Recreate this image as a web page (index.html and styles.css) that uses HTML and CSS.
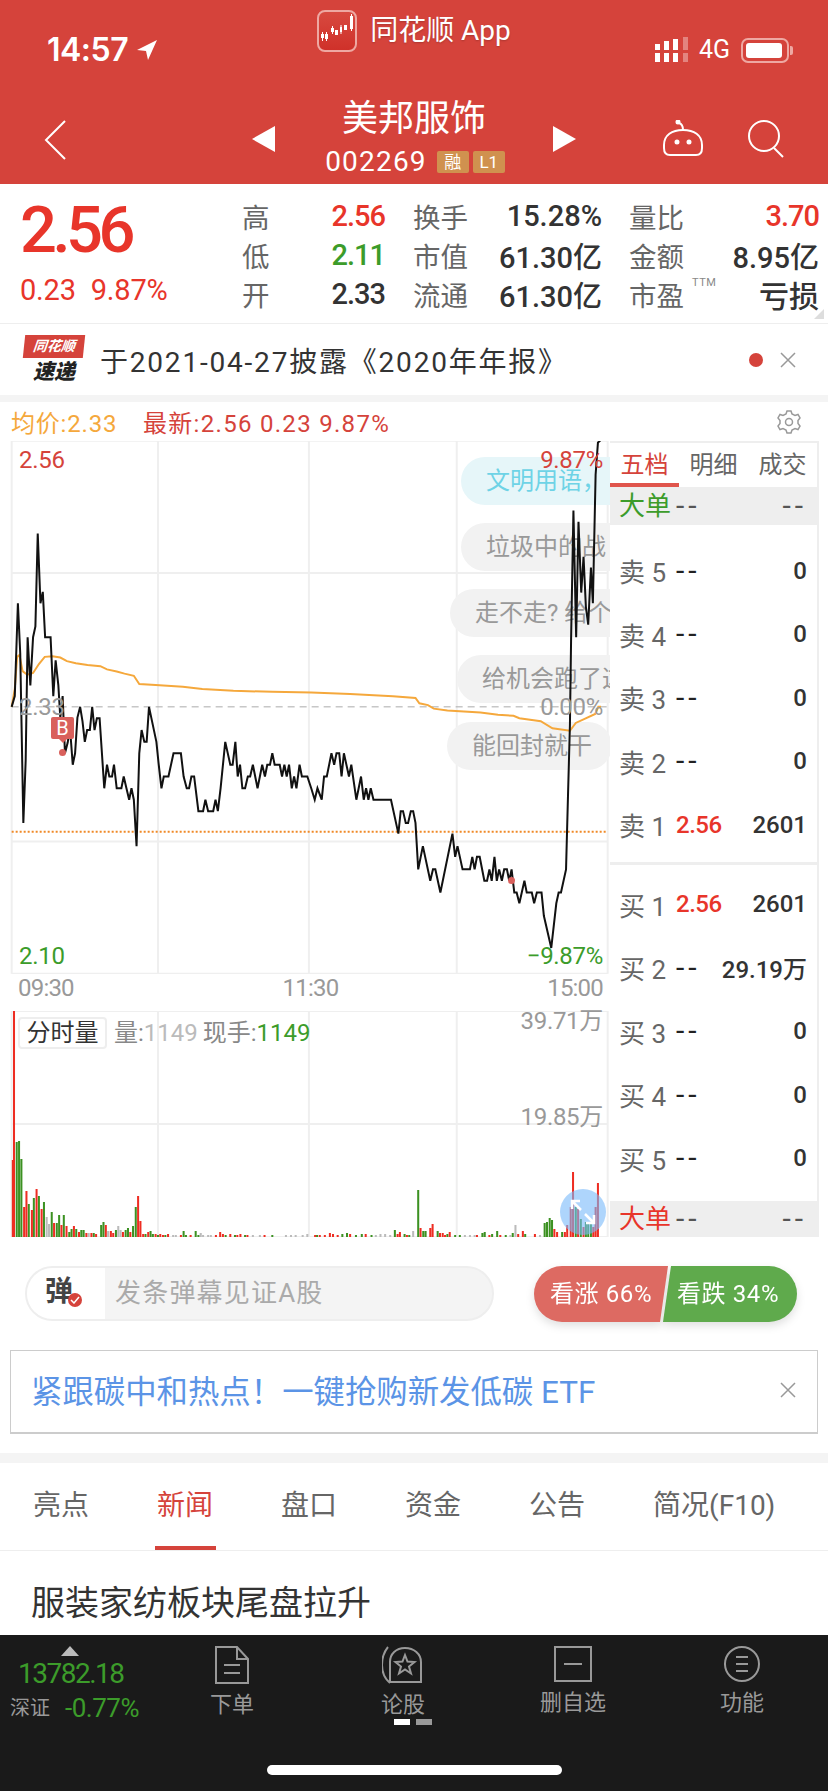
FILE: index.html
```html
<!DOCTYPE html>
<html lang="zh">
<head>
  <meta charset="UTF-8">
  <title>美邦服饰 002269</title>
  <link rel="stylesheet" href="styles.css">
</head>
<body>
<div id="page">

  <div class="header">
    <div class="status">
      <div class="status-left">
        <span class="clock">14:57</span>
        <svg class="locate" width="22" height="22" viewBox="0 0 22 22"><path d="M21 1 1 11l9 1 2 9z" fill="#fff"/></svg>
      </div>
      <div class="app-name">
        <svg class="app-logo" width="40" height="42" viewBox="0 0 40 42">
          <defs><linearGradient id="logoRed" x1="0" y1="0" x2="0" y2="1"><stop offset="0" stop-color="#d84a40"/><stop offset="1" stop-color="#cf3029"/></linearGradient></defs>
          <rect x="1" y="1" width="38" height="40" rx="7" fill="url(#logoRed)" stroke="#eea8a2" stroke-width="2"/>
          <path d="M4 24h3v4H4zM8 24h3v5H8zM14 18h3v4h-3zM18 20h3v5h-3zM23 17h2v5h-2zM27 15h3v5h-3zM33 6h3v13h-3z" fill="#fff"/>
          <path d="M5.500 22v9M9.500 22v9M15.500 16v8M24 15v9M34.500 4v17" stroke="#fff" fill="none"/>
        </svg>
        <span>同花顺 App</span>
      </div>
      <div class="status-right">
        <svg width="33" height="26" viewBox="0 0 33 26">
          <path d="M0 7h5v6H0zM9 4h5v9H9zM18 2h5v11h-5zM0 16h5v9H0zM9 16h5v9H9zM18 16h5v9h-5z" fill="#fff"/>
          <path d="M28 0h5v13h-5zM28 16h5v9h-5z" fill="#fff" opacity=".35"/>
        </svg>
        <span class="net">4G</span>
        <span class="battery"><i></i></span>
      </div>
    </div>
    <div class="nav">
      <div class="nav-left">
        <svg width="22" height="40" viewBox="0 0 22 40"><path d="M21 1 2 20l19 19" fill="none" stroke="#fff" stroke-width="2"/></svg>
      </div>
      <div class="nav-center">
        <span class="tri tri-left"></span>
        <div class="stock">
          <div class="stock-name">美邦服饰</div>
          <div class="stock-code">002269<b>融</b><b>L1</b></div>
        </div>
        <span class="tri tri-right"></span>
      </div>
      <div class="nav-right">
        <svg width="40" height="36" viewBox="0 0 40 36" fill="none" stroke="#fff" stroke-width="2">
          <path d="M1 25C1 15 9 10 20 10s19 5 19 15v3c0 5-2 7-6 7H7c-4 0-6-2-6-7z"/>
          <path d="M20 10c0-4-1-6-4-7"/>
          <circle cx="15" cy="2" r="1.500" fill="#fff"/>
          <circle cx="14" cy="22" r="1.500" fill="#fff"/>
          <circle cx="26" cy="22" r="1.500" fill="#fff"/>
        </svg>
        <svg width="38" height="38" viewBox="0 0 38 38" fill="none" stroke="#fff" stroke-width="2">
          <circle cx="16" cy="16" r="15"/>
          <path d="m26 28 9 9"/>
        </svg>
      </div>
    </div>
  </div>

  <div class="quote">
    <div class="price">
      <div class="price-now">2.56</div>
      <div class="price-change"><span>0.23</span><span>9.87%</span></div>
    </div>
    <div class="stats">
      <span class="stat-label first">高</span><span class="stat-val up">2.56</span>
      <span class="stat-label">换手</span><span class="stat-val wide">15.28%</span>
      <span class="stat-label">量比</span><span class="stat-val up">3.70</span>
      <span class="stat-label first">低</span><span class="stat-val down">2.11</span>
      <span class="stat-label">市值</span><span class="stat-val wide">61.30亿</span>
      <span class="stat-label">金额</span><span class="stat-val wide">8.95亿</span>
      <span class="stat-label first">开</span><span class="stat-val">2.33</span>
      <span class="stat-label">流通</span><span class="stat-val wide">61.30亿</span>
      <span class="stat-label ttm">市盈<sup>TTM</sup></span><span class="stat-val loss">亏损</span>
    </div>
    <span class="corner"></span>
  </div>

  <div class="notice">
    <div class="flash">
      <div class="flash-tag">同花顺</div>
      <div class="flash-name">速递</div>
    </div>
    <div class="notice-text">于2021-04-27披露《2020年年报》</div>
    <span class="notice-dot"></span>
    <svg class="close" width="16" height="16" viewBox="0 0 16 16"><path d="m1 1 14 14M15 1 1 15"/></svg>
  </div>
  <div class="band"></div>

  <div class="chart-head">
    <span class="avg">均价:2.33</span>
    <span class="latest">最新:2.56 0.23 9.87%</span>
    <svg class="gear" width="26" height="26" viewBox="0 0 26 26" fill="none" stroke="#999" stroke-width="1.500">
      <path d="M11 2h4l1 3 3 1.500 3-1 2 3.500-2 2.500v3l2 2.500-2 3.500-3-1-3 1.500-1 3h-4l-1-3-3-1.500-3 1-2-3.500 2-2.500v-3L2 9l2-3.500 3 1L10 5z"/>
      <circle cx="13" cy="13" r="3.500"/>
    </svg>
  </div>

  <div class="market">
    <div class="charts">
      <div class="price-chart">
        <svg class="plot" viewBox="0 0 1568 1568" preserveAspectRatio="none">
          <g class="grid">
            <path d="M30 5H1562M30 375H1562M30 1127H1562M30 1497H1562M30 5V1497M406 5V1497M794 5V1497M1174 5V1497M1562 5V1497"/>
          </g>
          <path class="dash" d="M30 750H1562"/>
          <path class="dots" d="M30 1100H1562"/>
        </svg>
        <div class="danmu d1">文明用语，</div>
        <div class="danmu d2">垃圾中的战</div>
        <div class="danmu d3">走不走? 给个</div>
        <div class="danmu d4">给机会跑了这</div>
        <div class="danmu d5">能回封就干</div>
        <svg class="plot" viewBox="0 0 1568 1568" preserveAspectRatio="none">
          <polyline class="avg-line" points="30,750 38,700 44,610 50,605 58,650 70,660 85,655 100,630 115,610 135,608 155,612 172,622 195,628 225,633 258,636 275,645 300,651 320,657 344,663 358,686 400,689 470,694 520,700 600,705 700,708 800,710 900,714 1010,720 1068,725 1078,740 1100,745 1115,755 1150,760 1235,766 1280,772 1320,775 1335,782 1390,790 1420,810 1465,817 1480,795 1500,785 1530,770 1538,750 1545,750"/>
          <polyline class="price-line" points="30,750 38,720 46,460 52,600 60,1075 66,900 71,555 78,690 85,555 91,525 97,265 104,460 110,428 116,555 130,555 137,720 143,620 150,690 155,780 161,720 167,880 174,850 180,810 187,912 193,880 199,780 206,750 212,790 218,848 224,815 231,815 237,750 243,815 249,782 256,782 262,880 268,978 275,912 281,945 288,945 293,912 300,978 312,978 318,945 325,978 332,1010 338,978 344,1010 351,1140 358,880 364,815 371,848 377,848 383,750 402,848 408,912 415,978 421,945 433,945 446,880 465,880 472,945 480,978 486,978 492,945 499,945 510,1042 522,1042 528,1010 535,1042 548,1042 554,1010 560,1042 567,978 579,848 592,912 598,912 605,848 611,945 617,912 623,978 630,978 637,945 643,945 650,912 662,978 674,912 681,945 687,912 694,912 700,880 706,912 719,912 725,945 731,912 737,945 743,912 750,978 756,945 762,978 770,912 776,945 790,945 800,978 809,1010 816,978 827,1010 833,945 840,945 852,880 859,912 865,880 872,880 878,945 884,880 897,945 903,912 916,1010 928,945 935,1010 941,978 947,1010 953,978 960,1010 1005,1010 1024,1105 1030,1042 1036,1042 1043,1075 1049,1075 1056,1042 1062,1042 1068,1075 1075,1205 1087,1140 1106,1237 1113,1205 1119,1205 1132,1270 1163,1105 1170,1170 1176,1140 1189,1205 1208,1205 1214,1170 1220,1205 1226,1170 1233,1170 1245,1237 1252,1237 1258,1205 1264,1237 1271,1170 1277,1237 1283,1205 1290,1237 1296,1205 1303,1205 1309,1237 1315,1205 1322,1270 1328,1270 1335,1300 1348,1237 1354,1270 1367,1270 1373,1300 1380,1270 1392,1270 1398,1335 1417,1425 1430,1300 1436,1270 1442,1270 1455,1205 1460,1000 1465,800 1468,560 1474,200 1481,555 1487,232 1494,430 1500,330 1506,470 1512,520 1519,360 1524,460 1531,100 1537,10 1543,5"/>
        </svg>
        <span class="axis-label al-top-left up-dim">2.56</span>
        <span class="axis-label al-top-right up-dim">9.87%</span>
        <span class="axis-label al-mid-left">2.33</span>
        <span class="axis-label al-mid-right">0.00%</span>
        <span class="axis-label al-low-left down">2.10</span>
        <span class="axis-label al-low-right down">−9.87%</span>
        <span class="trade-flag">B</span>
        <span class="trade-dot td1"></span>
        <span class="trade-dot td2"></span>
      </div>
      <div class="time-axis"><span>09:30</span><span>11:30</span><span>15:00</span></div>
      <div class="vol-chart">
        <svg class="plot" viewBox="0 0 1568 226" preserveAspectRatio="none">
          <g class="grid">
            <path d="M30 0H1562M30 113H1562M30 226H1562M30 0V226M406 0V226M794 0V226M1174 0V226M1562 0V226"/>
          </g>
          <path class="bar bar-grey" d="M120 226v-20M126 226v-13M228 226v-4M278 226v-6M304 226v-11M310 226v-7M445 226v-2M452 226v-2M516 226v-4M522 226v-2M535 226v-2M542 226v-2M650 226v-2M668 226v-2M735 226v-2M748 226v-2M760 226v-2M778 226v-2M790 226v-3M966 226v-2M978 226v-3M990 226v-3M1003 226v-2M1062 226v-6M1195 226v-2M1208 226v-2M1220 226v-2M1325 226v-12M1312 226v-2M1388 226v-2"/>
          <path class="bar bar-green" d="M43 226v-95M49 226v-96M55 226v-78M74 226v-33M87 226v-39M100 226v-41M113 226v-35M133 226v-25M146 226v-14M152 226v-22M164 226v-22M178 226v-5M184 226v-8M196 226v-8M209 226v-7M215 226v-7M241 226v-4M260 226v-12M266 226v-15M298 226v-7M323 226v-7M329 226v-9M342 226v-11M349 226v-30M374 226v-3M387 226v-6M393 226v-3M406 226v-2M425 226v-2M472 226v-6M478 226v-2M503 226v-6M510 226v-2M580 226v-2M604 226v-2M630 226v-2M700 226v-2M815 226v-2M880 226v-3M892 226v-4M915 226v-2M930 226v-3M955 226v-2M1015 226v-7M1040 226v-3M1052 226v-2M1075 226v-47M1088 226v-6M1094 226v-6M1125 226v-6M1150 226v-3M1170 226v-2M1182 226v-2M1240 226v-4M1246 226v-5M1265 226v-3M1278 226v-6M1300 226v-2M1318 226v-4M1350 226v-3M1400 226v-14M1406 226v-15M1413 226v-19M1419 226v-17M1445 226v-5M1480 226v-30M1493 226v-18M1506 226v-15M1512 226v-14M1519 226v-14"/>
          <path class="bar bar-red" d="M33 226v-77M36 226v-226M62 226v-30M68 226v-46M82 226v-27M94 226v-48M107 226v-28M139 226v-14M158 226v-12M171 226v-11M190 226v-11M203 226v-5M222 226v-4M235 226v-4M247 226v-3M272 226v-12M285 226v-6M291 226v-4M316 226v-5M335 226v-5M355 226v-41M361 226v-16M368 226v-3M381 226v-5M400 226v-3M412 226v-3M419 226v-2M432 226v-3M465 226v-2M490 226v-2M555 226v-2M566 226v-5M573 226v-3M592 226v-3M610 226v-2M618 226v-3M636 226v-2M680 226v-2M810 226v-2M822 226v-2M835 226v-2M848 226v-4M856 226v-3M868 226v-2M900 226v-3M940 226v-3M1022 226v-3M1028 226v-5M1046 226v-2M1081 226v-9M1106 226v-9M1112 226v-13M1131 226v-4M1138 226v-4M1144 226v-2M1156 226v-5M1226 226v-2M1258 226v-2M1286 226v-2M1332 226v-3M1344 226v-6M1375 226v-3M1425 226v-8M1432 226v-5M1452 226v-5M1458 226v-12M1467 226v-30M1473 226v-65M1486 226v-28M1500 226v-10M1525 226v-10M1531 226v-30M1537 226v-54"/>
        </svg>
        <div class="vol-legend">
          <span class="vol-tag">分时量</span>
          <span class="vol-item">量:<i class="faded">1149</i></span>
          <span class="vol-item">现手:<i class="down">1149</i></span>
        </div>
        <span class="vol-max">39.71万</span>
        <span class="vol-mid">19.85万</span>
        <span class="expand">
          <svg width="28" height="28" viewBox="0 0 28 28" fill="none" stroke="#fff" stroke-width="2.500"><path d="M3 11V3h8M3 3l9 9M25 17v8h-8M25 25l-9-9"/></svg>
        </span>
      </div>
    </div>

    <div class="book">
      <div class="book-tabs">
        <span class="active">五档</span><span>明细</span><span>成交</span>
      </div>
      <div class="big-order"><span class="down">大单</span><span class="none">--</span><span class="none none-end">--</span></div>
      <div class="levels sell">
        <div class="level"><span class="lv-name">卖 5</span><span class="none">--</span><span class="lv-vol">0</span></div>
        <div class="level"><span class="lv-name">卖 4</span><span class="none">--</span><span class="lv-vol">0</span></div>
        <div class="level"><span class="lv-name">卖 3</span><span class="none">--</span><span class="lv-vol">0</span></div>
        <div class="level"><span class="lv-name">卖 2</span><span class="none">--</span><span class="lv-vol">0</span></div>
        <div class="level"><span class="lv-name">卖 1</span><span class="lv-price">2.56</span><span class="lv-vol">2601</span></div>
      </div>
      <div class="levels buy">
        <div class="level"><span class="lv-name">买 1</span><span class="lv-price">2.56</span><span class="lv-vol">2601</span></div>
        <div class="level"><span class="lv-name">买 2</span><span class="none">--</span><span class="lv-vol">29.19万</span></div>
        <div class="level"><span class="lv-name">买 3</span><span class="none">--</span><span class="lv-vol">0</span></div>
        <div class="level"><span class="lv-name">买 4</span><span class="none">--</span><span class="lv-vol">0</span></div>
        <div class="level"><span class="lv-name">买 5</span><span class="none">--</span><span class="lv-vol">0</span></div>
      </div>
      <div class="big-order big-order-low"><span class="up">大单</span><span class="none">--</span><span class="none none-end">--</span></div>
    </div>
  </div>

  <div class="actions">
    <div class="danmu-input">
      <div class="danmu-key">弹<i><svg width="10" height="8" viewBox="0 0 10 8"><path d="m1 4 3 3 5-6" fill="none" stroke="#fff" stroke-width="1.500"/></svg></i></div>
      <div class="danmu-hint">发条弹幕见证A股</div>
    </div>
    <div class="vote">
      <div class="vote-up">看涨 66%</div>
      <div class="vote-down">看跌 34%</div>
    </div>
  </div>

  <div class="ad">
    <span class="ad-text">紧跟碳中和热点！一键抢购新发低碳 ETF</span>
    <svg class="close" width="16" height="16" viewBox="0 0 16 16"><path d="m1 1 14 14M15 1 1 15"/></svg>
  </div>
  <div class="band band-low"></div>

  <div class="tabs">
    <span>亮点</span><span class="active">新闻</span><span>盘口</span><span>资金</span><span>公告</span><span>简况(F10)</span>
  </div>
  <div class="headline">服装家纺板块尾盘拉升</div>

  <div class="footer">
    <div class="foot-row">
      <div class="index">
        <span class="index-tri"></span>
        <div class="index-val">13782.18</div>
        <div class="index-line"><span class="index-name">深证</span><span class="index-pct">-0.77%</span></div>
      </div>
      <div class="foot-item it1">
        <svg width="36" height="38" viewBox="0 0 36 38" fill="none" stroke="#999" stroke-width="2">
          <path d="M2 1h21l11 12v24H2zM23 1v12h11M10 19h16M10 27h16"/>
        </svg>
        <span>下单</span>
      </div>
      <div class="foot-item it2">
        <svg width="42" height="38" viewBox="0 0 42 38" fill="none" stroke="#999" stroke-width="2">
          <path d="M8 36V16C8 8 14 2 23 2s16 6 16 14v20z"/>
          <path d="M6 1C1 7 0 13 0 19s2 13 8 18"/>
          <path d="m23 9 2.500 6.500 7 .5-5.500 4.500 2 7-6-4-6 4 2-7-5.500-4.500 7-.5z"/>
        </svg>
        <span>论股</span>
      </div>
      <div class="foot-item it3">
        <svg width="38" height="36" viewBox="0 0 38 36" fill="none" stroke="#999" stroke-width="2">
          <path d="M1 1h36v34H1zM10 18h18"/>
        </svg>
        <span>删自选</span>
      </div>
      <div class="foot-item it4">
        <svg width="36" height="36" viewBox="0 0 36 36" fill="none" stroke="#999" stroke-width="2">
          <ellipse cx="18" cy="18" rx="17" ry="17"/>
          <path d="M12 11h12M12 18h12M12 25h12"/>
        </svg>
        <span>功能</span>
      </div>
    </div>
    <div class="pager"><i class="on"></i><i></i></div>
    <div class="home-bar"></div>
  </div>

</div>
</body>
</html>
```
FILE: styles.css
```css
body, div, span {
  margin: 0;
  padding: 0;
}

body {
  background: #fff;
  font-family: Roboto, "Noto Sans CJK SC", sans-serif;
  color: #333;
}

i {
  font-style: normal;
}

svg {
  display: block;
}

#page {
  width: 828px;
  height: 1792px;
  overflow: hidden;
  position: relative;
}

.up { color: #e8352a; }
.down { color: #3c9c2a; }

/* red header */
.header {
  height: 184px;
  background: #d5433b;
  color: #fff;
}

.status {
  height: 96px;
  display: grid;
  grid-template-columns: 1fr auto 1fr;
  align-items: start;
}

.status-left {
  display: flex;
  align-items: center;
  gap: 8px;
  padding: 32px 0 0 47px;
}

.clock {
  font: 600 32px/36px Inter, sans-serif;
  letter-spacing: -.5px;
}

.app-name {
  display: flex;
  align-items: center;
  gap: 13px;
  padding-top: 10px;
  font-size: 28px;
  line-height: 42px;
  text-shadow: 0 1px 2px rgba(0, 0, 0, .2);
}

.status-right {
  display: flex;
  justify-content: flex-end;
  align-items: center;
  gap: 11px;
  padding: 37px 39px 0 0;
}

.net {
  font-size: 25px;
  line-height: 26px;
}

.battery {
  position: relative;
  width: 48px;
  height: 25px;
  border: 2px solid #eea8a2;
  border-radius: 7px;
  box-sizing: border-box;
  padding: 3px;
}

.battery i {
  display: block;
  width: 36px;
  height: 15px;
  background: #fff;
  border-radius: 3px;
}

.battery:after {
  content: "";
  position: absolute;
  right: -6px;
  top: 6px;
  width: 3px;
  height: 9px;
  background: #eea8a2;
  border-radius: 0 2px 2px 0;
}

.nav {
  height: 88px;
  display: grid;
  grid-template-columns: 1fr auto 1fr;
}

.nav-left {
  padding: 24px 0 0 44px;
}

.nav-center {
  display: flex;
  align-items: flex-start;
  gap: 49px;
}

.tri {
  width: 0;
  height: 0;
  margin-top: 30px;
  border-top: 13px solid transparent;
  border-bottom: 13px solid transparent;
}

.tri-left { border-right: 23px solid #fff; }
.tri-right { border-left: 23px solid #fff; }

.stock {
  width: 180px;
  text-align: center;
}

.stock-name {
  font-size: 36px;
  line-height: 46px;
}

.stock-code {
  display: flex;
  align-items: center;
  justify-content: center;
  gap: 4px;
  padding-left: 2px;
  font-size: 28px;
  line-height: 40px;
  letter-spacing: 1.200px;
  white-space: nowrap;
}

.stock-code b {
  flex: none;
  width: 32px;
  height: 22px;
  background: #d0914f;
  border-radius: 2px;
  font-size: 17px;
  font-weight: 400;
  line-height: 22px;
  letter-spacing: 0;
  text-align: center;
}

.stock-code b:first-of-type {
  margin-left: 6px;
}

.nav-right {
  display: flex;
  justify-content: flex-end;
  align-items: flex-start;
  gap: 45px;
  padding: 24px 42px 0 0;
}

/* quote block */
.quote {
  position: relative;
  height: 139px;
  border-bottom: 1px solid #eee;
  display: flex;
}

.price {
  width: 242px;
  padding: 0 0 0 20px;
  box-sizing: border-box;
}

.price-now {
  margin-top: 12px;
  font-size: 65px;
  font-weight: 500;
  line-height: 68px;
  letter-spacing: -4.500px;
  color: #e8352a;
}

.price-change {
  display: flex;
  gap: 15px;
  margin-top: 8px;
  font-size: 29px;
  line-height: 36px;
  letter-spacing: -.2px;
  color: #e8352a;
}

.stats {
  width: 577px;
  padding-top: 12px;
  display: grid;
  grid-template-columns: 60px 83px 83px 134px 82px 135px;
  grid-auto-rows: 39px;
  align-items: center;
}

.stat-label {
  position: relative;
  font-size: 27.500px;
  color: #666;
  text-align: right;
}

.stat-label.first {
  text-align: left;
}

.stat-val {
  font-size: 29px;
  font-weight: 500;
  letter-spacing: -1px;
  text-align: right;
  white-space: nowrap;
  color: #333;
}

.stat-val.wide {
  letter-spacing: 0;
}

.stat-val.up { color: #e8352a; }
.stat-val.down { color: #3c9c2a; }

.stat-val.loss {
  font-size: 30px;
  letter-spacing: 0;
}

.ttm sup {
  position: absolute;
  left: 90px;
  top: 3px;
  font-size: 11px;
  line-height: 12px;
  letter-spacing: .5px;
  color: #888;
}

.corner {
  position: absolute;
  right: 4px;
  bottom: 4px;
  border-left: 10px solid transparent;
  border-bottom: 10px solid #ddd;
}

/* notice line */
.notice {
  height: 71px;
  display: flex;
  align-items: center;
  padding: 0 32px 0 24px;
}

.flash {
  width: 60px;
  margin-right: 16px;
  text-align: center;
}

.flash-tag {
  height: 23px;
  background: #d5433b;
  color: #fff;
  font-size: 14px;
  font-weight: 700;
  font-style: italic;
  line-height: 23px;
  transform: skewX(-6deg);
}

.flash-name {
  margin-top: 2px;
  font-size: 21px;
  font-weight: 900;
  font-style: italic;
  line-height: 24px;
  color: #222;
}

.notice-text {
  flex: 1;
  font-size: 28px;
  letter-spacing: 1.800px;
  color: #333;
}

.notice-dot {
  width: 14px;
  height: 14px;
  background: #d5433b;
  border-radius: 50%;
  margin-right: 17px;
}

.close {
  flex: none;
}

.close path {
  fill: none;
  stroke: #999;
  stroke-width: 1.500;
}

.band {
  height: 7px;
  background: #f4f4f4;
}

/* chart head */
.chart-head {
  height: 39px;
  display: flex;
  align-items: center;
  padding: 0 26px 0 11px;
  font-size: 24px;
}

.avg {
  width: 132px;
  letter-spacing: .8px;
  color: #f5a83c;
}

.latest {
  flex: 1;
  letter-spacing: 1.300px;
  color: #d5433b;
}

/* chart and order book */
.market {
  display: flex;
  height: 796px;
}

.charts {
  width: 610px;
  flex: none;
}

.price-chart {
  position: relative;
  height: 533px;
  overflow: hidden;
}

.plot {
  position: absolute;
  left: 0;
  top: 0;
  width: 610px;
  height: 560px;
  margin-top: -2px;
}

.grid path {
  fill: none;
  stroke: #efefef;
  stroke-width: 2;
  vector-effect: non-scaling-stroke;
}

.dash {
  fill: none;
  stroke: #aaa;
  stroke-width: 1;
  stroke-dasharray: 7 5;
  vector-effect: non-scaling-stroke;
}

.dots {
  fill: none;
  stroke: #f08a28;
  stroke-width: 2;
  stroke-dasharray: 2 2;
  vector-effect: non-scaling-stroke;
}

.price-line,
.avg-line {
  fill: none;
  vector-effect: non-scaling-stroke;
}

.price-line {
  stroke: #111;
  stroke-width: 2;
}

.avg-line {
  stroke: #f5a83c;
  stroke-width: 2;
}

.danmu {
  position: absolute;
  height: 48px;
  width: 300px;
  border-radius: 24px;
  background: #f2f2f2;
  color: #999;
  font-size: 24px;
  line-height: 48px;
  white-space: nowrap;
}

.d1 { left: 461px; top: 16px; padding-left: 25px; background: #e6f6f9; color: #6ed3e6; }
.d2 { left: 461px; top: 82px; padding-left: 25px; }
.d3 { left: 450px; top: 148px; padding-left: 25px; }
.d4 { left: 457px; top: 214px; padding-left: 25px; }
.d5 { left: 447px; top: 281px; width: 140px; padding: 0 0 0 25px; }

.axis-label {
  position: absolute;
  font-size: 24px;
  line-height: 28px;
  letter-spacing: -.3px;
  color: #999;
}

.up-dim { color: #d5433b; }
.axis-label.down { color: #3c9c2a; }

.al-top-left { left: 19px; top: 5px; }
.al-top-right { right: 7px; top: 5px; }
.al-mid-left { left: 19px; top: 252px; }
.al-mid-right { right: 7px; top: 252px; }
.al-low-left { left: 19px; top: 501px; }
.al-low-right { right: 7px; top: 501px; }

.trade-flag {
  position: absolute;
  left: 51px;
  top: 276px;
  width: 23px;
  height: 22px;
  background: #d9605c;
  border-radius: 2px;
  color: #fff;
  font-size: 20px;
  line-height: 22px;
  text-align: center;
}

.trade-flag:after {
  content: "";
  position: absolute;
  left: 8px;
  top: 22px;
  border-top: 4px solid #d9605c;
  border-left: 4px solid transparent;
  border-right: 4px solid transparent;
}

.trade-dot {
  position: absolute;
  width: 7px;
  height: 7px;
  background: #d9605c;
  border-radius: 50%;
}

.td1 { left: 59px; top: 308px; }
.td2 { left: 508px; top: 436px; }

.time-axis {
  height: 37px;
  display: flex;
  justify-content: space-between;
  padding: 2px 7px 0 18px;
  box-sizing: border-box;
  font-size: 24px;
  line-height: 24px;
  letter-spacing: -.8px;
  color: #999;
}

.vol-chart {
  position: relative;
  height: 226px;
}

.vol-chart .plot {
  height: 226px;
  margin-top: 0;
}

.bar {
  fill: none;
  stroke-width: 5.200;
}

.bar-red { stroke: #ee2d22; }
.bar-green { stroke: #3c9122; }
.bar-grey { stroke: #bbb; }

.vol-legend {
  position: absolute;
  left: 18px;
  top: 6px;
  display: flex;
  align-items: center;
  gap: 5px;
  font-size: 24px;
  line-height: 32px;
  color: #888;
}

.vol-tag {
  width: 89px;
  height: 32px;
  box-sizing: border-box;
  margin-right: 2px;
  background: rgba(255, 255, 255, .9);
  border: 2px solid #eee;
  border-radius: 4px;
  color: #333;
  line-height: 28px;
  text-align: center;
}

.vol-item {
  white-space: nowrap;
}

.faded { color: #bbb; }

.vol-max,
.vol-mid {
  position: absolute;
  right: 7px;
  font-size: 24px;
  line-height: 28px;
  letter-spacing: -.3px;
  color: #999;
}

.vol-max { top: -4px; }
.vol-mid { top: 92px; }

.expand {
  position: absolute;
  left: 560px;
  top: 178px;
  width: 46px;
  height: 46px;
  border-radius: 50%;
  background: rgba(120, 185, 250, .6);
  display: flex;
  align-items: center;
  justify-content: center;
}

.book {
  width: 207px;
  height: 796px;
  border-right: 2px solid #eee;
  display: flex;
  flex-direction: column;
  font-size: 26px;
}

.book-tabs {
  height: 46px;
  display: flex;
  border-top: 2px solid #eee;
  box-sizing: border-box;
  color: #666;
  line-height: 44px;
  font-size: 24px;
}

.book-tabs span {
  width: 69px;
  text-align: center;
}

.book-tabs .active {
  color: #d5433b;
  border-bottom: 4px solid #e0554c;
  box-sizing: border-box;
  height: 44px;
}

.big-order {
  height: 38px;
  flex: none;
  background: #eee;
  display: flex;
  align-items: center;
  padding: 0 10px 0 9px;
  line-height: 38px;
}

.big-order-low {
  height: 36px;
  line-height: 36px;
}

.big-order .none {
  margin-left: 5px;
  color: #555;
}

.big-order .none-end {
  margin-left: auto;
}

.none {
  font-size: 30px;
  line-height: 30px;
  letter-spacing: 4px;
  color: #222;
}

.levels {
  display: flex;
  flex-direction: column;
  justify-content: center;
}

.sell {
  height: 340px;
  padding-top: 8px;
  box-sizing: border-box;
  border-bottom: 3px solid #eee;
}

.buy {
  height: 336px;
  padding-bottom: 4px;
  box-sizing: border-box;
}

.level {
  height: 63.500px;
  display: flex;
  align-items: center;
  padding: 0 10px 0 9px;
}

.lv-name {
  width: 57px;
  color: #666;
  white-space: nowrap;
}

.lv-price {
  font-size: 24px;
  font-weight: 500;
  letter-spacing: -.5px;
  color: #e8352a;
}

.lv-vol {
  margin-left: auto;
  font-size: 24px;
  font-weight: 500;
  color: #333;
}

/* input and vote row */
.actions {
  height: 113px;
  display: flex;
  justify-content: space-between;
  align-items: flex-start;
  padding: 29px 31px 0 25px;
  box-sizing: border-box;
}

.danmu-input {
  width: 469px;
  height: 55px;
  box-sizing: border-box;
  border: 2px solid #eee;
  border-radius: 28px;
  background: #f4f4f4;
  display: flex;
  overflow: hidden;
}

.danmu-key {
  position: relative;
  width: 78px;
  background: #fff;
  padding-left: 18px;
  box-sizing: border-box;
  font-size: 28px;
  font-weight: 700;
  line-height: 48px;
  color: #444;
}

.danmu-key i {
  position: absolute;
  left: 41px;
  top: 25px;
  width: 14px;
  height: 14px;
  background: #d5433b;
  border-radius: 50%;
  display: flex;
  align-items: center;
  justify-content: center;
}

.danmu-hint {
  padding-left: 10px;
  font-size: 26px;
  line-height: 50px;
  letter-spacing: 1.200px;
  color: #aaa;
}

.vote {
  width: 263px;
  height: 56px;
  display: flex;
  font-size: 24px;
  line-height: 56px;
  letter-spacing: .6px;
  color: #fff;
  filter: drop-shadow(0 4px 4px rgba(0, 0, 0, .12));
}

.vote-up,
.vote-down {
  width: 134px;
  box-sizing: border-box;
  white-space: nowrap;
}

.vote-up {
  padding-left: 16px;
  background: #dd6a62;
  border-radius: 28px 0 0 28px;
  clip-path: polygon(0 0, 100% 0, calc(100% - 8px) 100%, 0 100%);
}

.vote-down {
  margin-left: -5px;
  padding-left: 14px;
  background: #5faa4c;
  border-radius: 0 28px 28px 0;
  clip-path: polygon(8px 0, 100% 0, 100% 100%, 0 100%);
}

.ad {
  margin: 0 10px;
  height: 84px;
  box-sizing: border-box;
  border: 1px solid #ccc;
  border-bottom-width: 2px;
  display: flex;
  justify-content: space-between;
  align-items: center;
  padding: 0 21px 4px 20px;
}

.ad-text {
  font-size: 31.400px;
  color: #5b94e6;
}

.band-low {
  height: 10px;
  margin-top: 19px;
}

/* news tabs */
.tabs {
  height: 88px;
  box-sizing: border-box;
  border-bottom: 1px solid #eee;
  display: flex;
  gap: 68px;
  padding-left: 33px;
  font-size: 28px;
  line-height: 86px;
  color: #666;
}

.tabs .active {
  position: relative;
  color: #d5433b;
}

.tabs .active:after {
  content: "";
  position: absolute;
  left: -2px;
  right: -3px;
  bottom: 0;
  height: 4px;
  background: #d5433b;
}

.headline {
  height: 84px;
  box-sizing: border-box;
  padding: 10px 0 0 31px;
  font-size: 34px;
  line-height: 84px;
  color: #333;
}

/* bottom bar */
.footer {
  height: 156px;
  background: #1a1a1a;
  position: relative;
}

.foot-row {
  display: flex;
  height: 84px;
}

.index {
  position: relative;
  width: 160px;
  padding: 0 0 0 10px;
  box-sizing: border-box;
}

.index-tri {
  display: block;
  width: 0;
  margin: 11px 0 0 51px;
  border-left: 9px solid transparent;
  border-right: 9px solid transparent;
  border-bottom: 10px solid #bbb;
}

.index-val {
  margin-left: 8px;
  font-size: 28px;
  line-height: 36px;
  letter-spacing: -1.500px;
  color: #3c9c2a;
}

.index-line {
  display: flex;
  align-items: center;
  gap: 15px;
  line-height: 32px;
}

.index-name {
  font-size: 20px;
  color: #999;
}

.index-pct {
  font-size: 26px;
  letter-spacing: -.5px;
  color: #3c9c2a;
}

.foot-item {
  position: absolute;
  top: 11px;
  display: flex;
  flex-direction: column;
  align-items: center;
  gap: 6px;
  font-size: 22px;
  line-height: 30px;
  color: #999;
  transform: translateX(-50%);
}

.it1 { left: 232px; }
.it2 { left: 403px; }
.it3 { left: 573px; }
.it4 { left: 742px; }

.pager {
  position: absolute;
  left: 394px;
  top: 84px;
  display: flex;
  gap: 6px;
}

.pager i {
  width: 16px;
  height: 6px;
  background: #999;
}

.pager .on {
  background: #fff;
}

.home-bar {
  position: absolute;
  left: 267px;
  top: 130px;
  width: 295px;
  height: 10px;
  background: #fff;
  border-radius: 5px;
}
```
